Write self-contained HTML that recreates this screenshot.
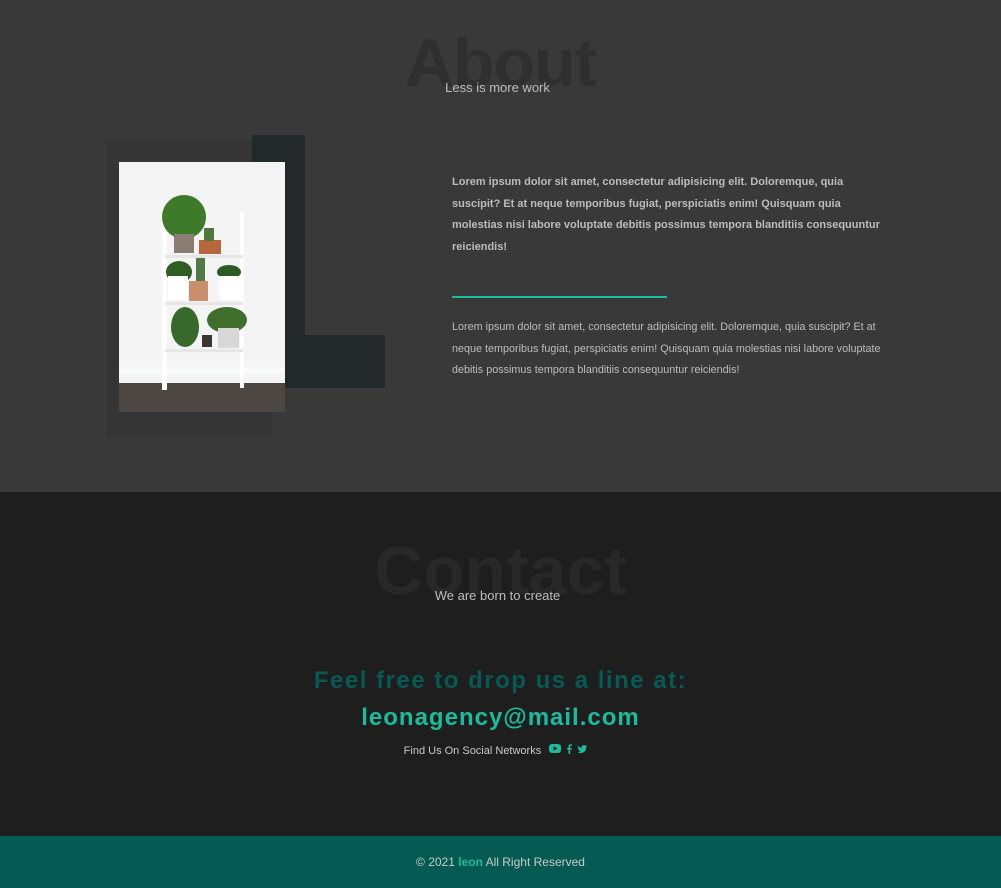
<!DOCTYPE html>
<html><head><style>
*{margin:0;padding:0;box-sizing:border-box}
body{width:1001px;height:888px;font-family:"Liberation Sans",Arial,sans-serif;background:#1e1e1e;overflow:hidden;position:relative}
.about{position:absolute;left:0;top:0;width:1001px;height:492px;background:#393939}
.big{position:absolute;left:0;width:100%;text-align:center;font-weight:bold;font-size:68px;color:#2f2f2f}
.sub{position:absolute;left:0;width:100%;text-align:center;font-size:13px;color:#bdbdbd}
.p1{position:absolute;left:452px;top:172px;width:435px;font-size:11px;font-weight:bold;line-height:21.5px;color:#bcbcbc}
.p2{position:absolute;left:452px;top:317px;width:440px;font-size:10.8px;line-height:21.5px;color:#bcbcbc}
.line{position:absolute;left:452px;top:296px;width:215px;height:2px;background:#1abc9c}
.contact{position:absolute;left:0;top:492px;width:1001px;height:344px;background:#1e1e1e}
footer{position:absolute;left:0;top:836px;width:1001px;height:52px;background:#065a54;text-align:center;line-height:52px;font-size:12px;color:#c9c9c9}
</style></head><body>
<div class="about">
<div class="big" style="top:24px;letter-spacing:-1px">About</div>
<div class="sub" style="top:80px;left:-3px">Less is more work</div>
<div style="position:absolute;left:106px;top:140px;width:166px;height:298px;background:#353535"></div>
<div style="position:absolute;left:252px;top:135px;width:53px;height:253px;background:#222a29"></div>
<div style="position:absolute;left:252px;top:335px;width:133px;height:53px;background:#222a29"></div>
<svg style="position:absolute;left:119px;top:162px" width="166" height="250" viewBox="0 0 166 250">
<rect width="166" height="250" fill="#f4f4f4"/>
<rect y="205" width="166" height="7" fill="#fafafa"/>
<rect y="221" width="166" height="29" fill="#4d4743"/>
<rect x="43" y="50" width="5" height="178" fill="#fff"/><rect x="121" y="50" width="4" height="176" fill="#fff"/>
<rect x="46" y="93" width="78" height="3" fill="#e6e6e6"/><rect x="46" y="140" width="78" height="3" fill="#e6e6e6"/><rect x="46" y="187" width="78" height="3" fill="#e6e6e6"/>
<ellipse cx="65" cy="55" rx="22" ry="22" fill="#3d7a2a"/><rect x="55" y="72" width="20" height="19" fill="#8a7d74"/>
<rect x="80" y="78" width="22" height="14" fill="#b8673d"/><rect x="85" y="66" width="10" height="13" fill="#4d7a3a"/>
<ellipse cx="60" cy="110" rx="13" ry="11" fill="#2f5e23"/><rect x="49" y="114" width="20" height="24" fill="#fff"/>
<rect x="77" y="96" width="9" height="27" fill="#4f7a45"/><rect x="70" y="119" width="19" height="20" fill="#c98e6a"/>
<ellipse cx="110" cy="110" rx="12" ry="7" fill="#2c5a22"/><rect x="100" y="114" width="21" height="24" fill="#fff"/>
<ellipse cx="66" cy="165" rx="14" ry="20" fill="#37692b"/><ellipse cx="108" cy="158" rx="20" ry="13" fill="#3f6e2d"/>
<rect x="99" y="166" width="21" height="20" fill="#d8d8d8"/><rect x="83" y="173" width="10" height="12" fill="#3b3531"/>
</svg>
<div class="p1">Lorem ipsum dolor sit amet, consectetur adipisicing elit. Doloremque, quia suscipit? Et at neque temporibus fugiat, perspiciatis enim! Quisquam quia molestias nisi labore voluptate debitis possimus tempora blanditiis consequuntur reiciendis!</div>
<div class="line"></div>
<div class="p2">Lorem ipsum dolor sit amet, consectetur adipisicing elit. Doloremque, quia suscipit? Et at neque temporibus fugiat, perspiciatis enim! Quisquam quia molestias nisi labore voluptate debitis possimus tempora blanditiis consequuntur reiciendis!</div>
</div>
<div class="contact">
<div class="big" style="top:40px;color:#282828">Contact</div>
<div class="sub" style="top:96px;left:-3px">We are born to create</div>
<div style="position:absolute;left:0;width:100%;top:175px;text-align:center;font-weight:bold;font-size:24px;letter-spacing:1.5px;color:#065a54">Feel free to drop us a line at:</div>
<div style="position:absolute;left:0;width:100%;top:212px;text-align:center;font-weight:bold;font-size:24px;letter-spacing:1px;color:#1abc9c">leonagency@mail.com</div>
<div style="position:absolute;left:0;width:100%;top:251px;text-align:center;font-size:11px;color:#c9c9c9">Find Us On Social Networks&nbsp;
<svg width="50" height="12" viewBox="0 0 50 12" style="vertical-align:-1px"><rect x="2" y="1" width="12" height="9" rx="3" fill="#1abc9c"/><path d="M6.5 3.3v4.4l4-2.2z" fill="#1e1e1e"/>
<path d="M21.5 11V6.5h-1.5V5h1.5V3.5c0-1.5.8-2.3 2.2-2.3h1.2v1.5h-.9c-.6 0-.8.3-.8.8V5h1.7l-.3 1.5h-1.4V11z" fill="#1abc9c"/>
<path d="M31 3c.8.9 2 1.6 3.6 1.6-.2-1.8 1.5-3 3-2.300.5.2.8.5 1 .5.6 0 1.1-.4 1.4-.5-.2.6-.6 1-1 1.3.5 0 .9-.2 1.2-.3-.3.5-.7.9-1.100 1.2.2 3.8-3.8 7.3-8.8 4.8 1.3.1 2.4-.3 3.3-1-1 0-1.8-.6-2.100-1.5.3.1.7.1 1-.1-1.1-.3-1.8-1.2-1.8-2.3.3.2.6.3 1 .3-1-.8-1.3-2-.7-3z" fill="#1abc9c"/></svg></div>
</div>
<footer>© 2021 <b style="color:#1abc9c">leon</b> All Right Reserved</footer>
</body></html>
